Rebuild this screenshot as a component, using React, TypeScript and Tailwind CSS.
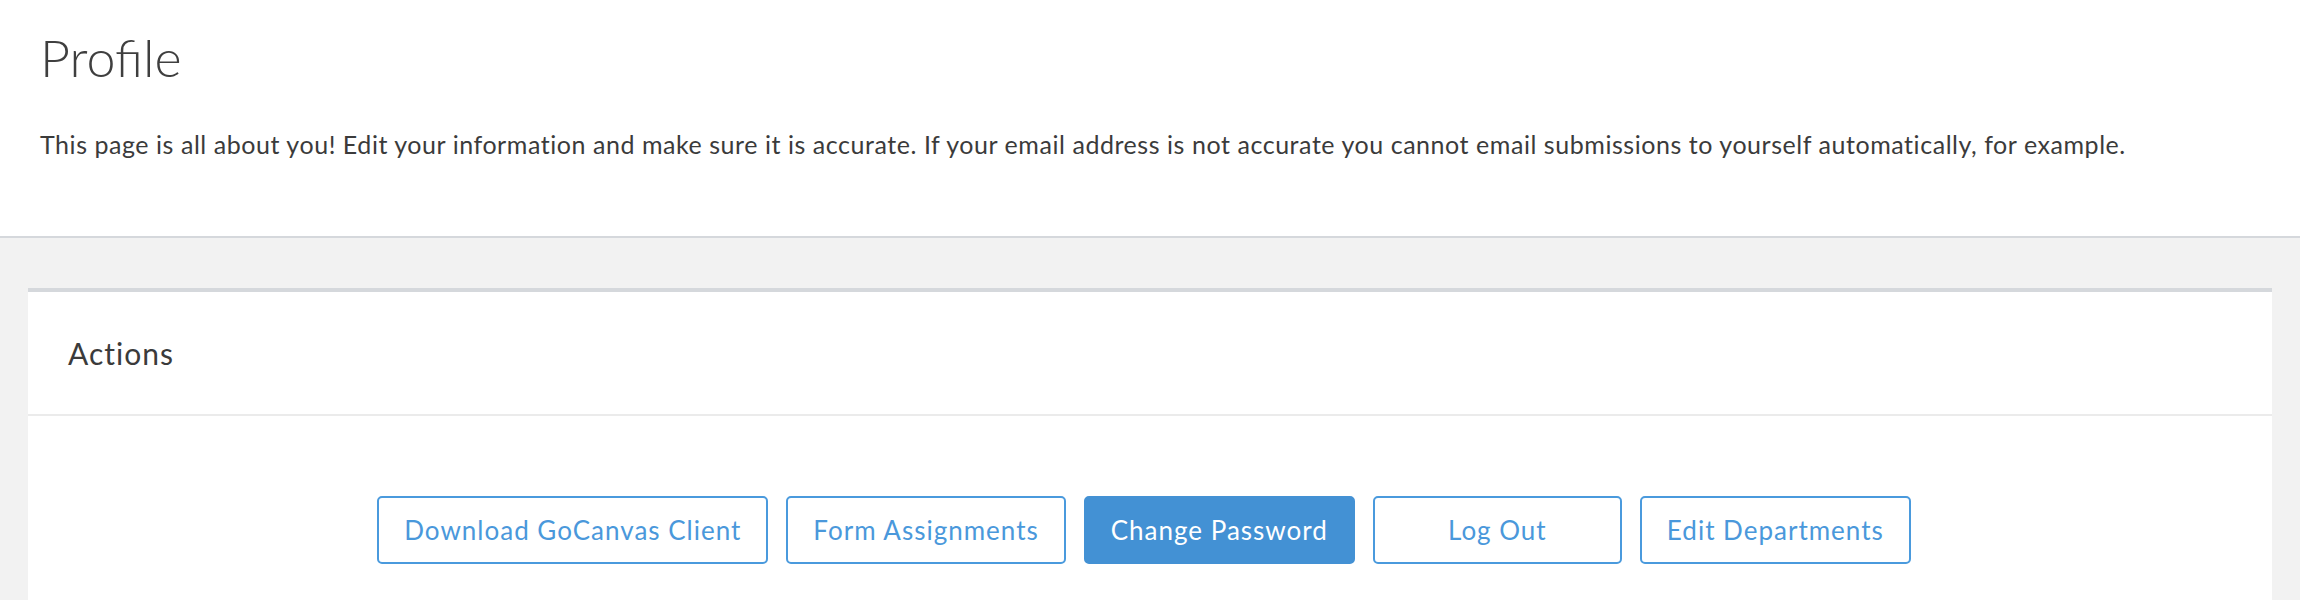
const font = { fontFamily: 'Lato, "Open Sans", sans-serif' };

const actions = [
  { label: 'Download GoCanvas Client', primary: false },
  { label: 'Form Assignments', primary: false },
  { label: 'Change Password', primary: true },
  { label: 'Log Out', primary: false },
  { label: 'Edit Departments', primary: false },
];

function ActionButton({ label, primary }: { label: string; primary: boolean }) {
  return (
    <button
      type="button"
      className={
        primary
          ? 'h-[68px] min-w-[249px] rounded-[5px] border-2 border-[#4391d4] bg-[#4391d4] px-[25px] text-[26px] leading-none tracking-[1px] text-white'
          : 'h-[68px] min-w-[249px] rounded-[5px] border-2 border-[#4a9add] bg-white px-[25px] text-[26px] leading-none tracking-[1px] text-[#4a98db]'
      }
    >
      {label}
    </button>
  );
}

export default function App() {
  return (
    <div className="min-h-[600px] bg-[#f2f2f2]" style={font}>
      <header className="h-[238px] border-b-2 border-[#d5d8dc] bg-white pl-[40px] pt-[31px]">
        <h1 className="text-[52px] font-light leading-none text-[#3f3f3f]">Profile</h1>
        <p className="mt-[49px] text-[25px] leading-none tracking-[0.55px] text-[#3b3b3b]">
          This page is all about you! Edit your information and make sure it is accurate. If your email address is not
          accurate you cannot email submissions to yourself automatically, for example.
        </p>
      </header>

      <main className="px-[28px] pt-[50px]">
        <section className="border-t-4 border-[#d5d8dc] bg-white">
          <div className="flex h-[124px] items-center border-b-2 border-[#ebebeb] px-[40px]">
            <h2 className="text-[30px] leading-none tracking-[1px] text-[#3b3b3b]">Actions</h2>
          </div>
          <div className="flex justify-center gap-[18px] pb-[60px] pr-[12px] pt-[80px]">
            {actions.map((a) => (
              <ActionButton key={a.label} label={a.label} primary={a.primary} />
            ))}
          </div>
        </section>
      </main>
    </div>
  );
}
